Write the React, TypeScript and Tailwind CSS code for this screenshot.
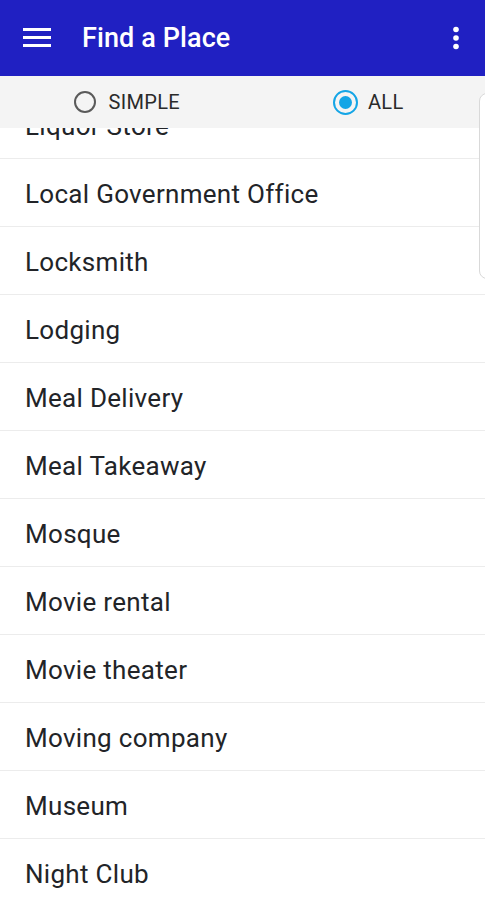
import React from "react";

const items = [
  "Liquor Store",
  "Local Government Office",
  "Locksmith",
  "Lodging",
  "Meal Delivery",
  "Meal Takeaway",
  "Mosque",
  "Movie rental",
  "Movie theater",
  "Moving company",
  "Museum",
  "Night Club",
  "Painter",
];

export default function App() {
  return (
    <div
      className="relative w-[485px] h-[900px] overflow-hidden bg-white"
      style={{ fontFamily: "Roboto, 'Noto Sans', sans-serif" }}
    >
      <header className="h-[76px] bg-[#2020c2] flex items-center text-white">
        <div className="w-[82px] flex justify-center pl-[6px] pr-[14px]">
          <svg width="28" height="20" viewBox="0 0 28 20">
            <rect x="0" y="0" width="28" height="3" fill="white" />
            <rect x="0" y="8" width="28" height="3" fill="white" />
            <rect x="0" y="16" width="28" height="3" fill="white" />
          </svg>
        </div>
        <h1 className="text-[27px] font-medium tracking-[0.1px] flex-1">Find a Place</h1>
        <div className="w-[56px] flex justify-center pr-[2px]">
          <svg width="8" height="24" viewBox="0 0 8 24">
            <circle cx="4" cy="3.5" r="2.8" fill="white" />
            <circle cx="4" cy="12" r="2.8" fill="white" />
            <circle cx="4" cy="20.5" r="2.8" fill="white" />
          </svg>
        </div>
      </header>
      <div className="h-[52px] bg-[#f4f4f4] flex">
        <div className="flex-1 flex items-center justify-center gap-[13px] pl-[10px]">
          <span className="w-[22px] h-[22px] rounded-full border-[2px] border-[#5a5a5a]" />
          <span className="text-[20px] tracking-[0.3px] text-[#2a2a2a] leading-none">SIMPLE</span>
        </div>
        <div className="flex-1 flex items-center justify-center gap-[10px] pl-[8px]">
          <span className="w-[25px] h-[25px] rounded-full border-[2.5px] border-[#14a5e6] flex items-center justify-center">
            <span className="w-[13px] h-[13px] rounded-full bg-[#14a5e6]" />
          </span>
          <span className="text-[20px] tracking-[0.3px] text-[#2a2a2a] leading-none">ALL</span>
        </div>
      </div>
      <div className="relative h-[772px] overflow-hidden">
        <ul className="-mt-[37px]">
          {items.map((it) => (
            <li
              key={it}
              className="h-[68px] flex items-center pl-[25px] pt-[3px] border-b border-[#ececec] text-[26px] tracking-[0.3px] text-[#222428]"
            >
              {it}
            </li>
          ))}
        </ul>
      </div>
      <div className="absolute left-[479px] top-[93px] w-[20px] h-[186px] rounded-[8px] border border-[#d9d9d9] bg-white" />
    </div>
  );
}
